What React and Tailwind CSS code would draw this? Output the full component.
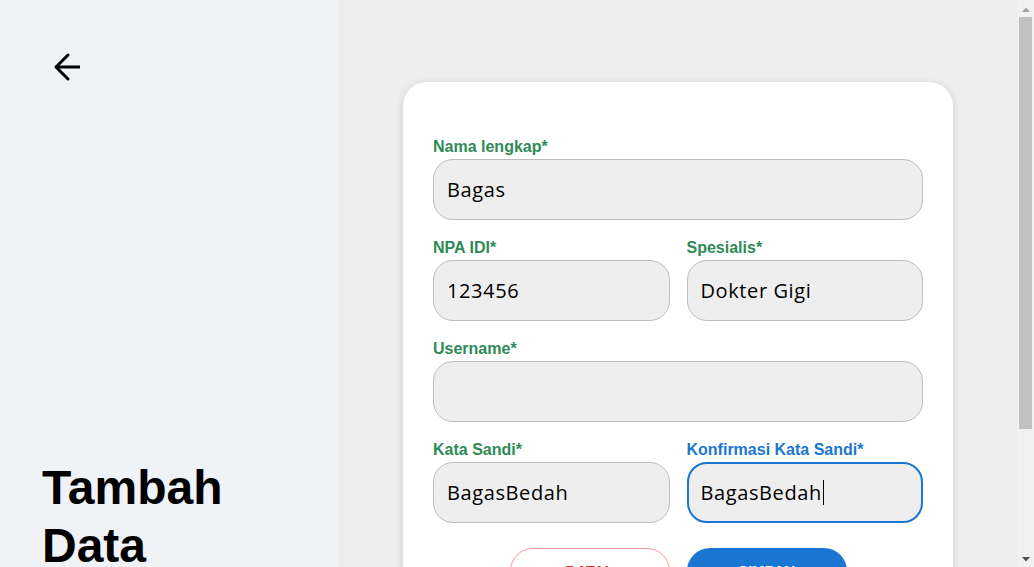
import React from "react";

const font = { fontFamily: '"Liberation Sans", Arial, sans-serif' };
const inFont = { fontFamily: '"Open Sans", "Noto Sans", sans-serif' };

function Field({ label, value, focused }) {
  return (
    <div className="flex-1 min-w-0">
      <label
        className={
          focused
            ? "block h-[19px] leading-[19px] mb-[3px] text-[16px] font-bold text-[#1976d2]"
            : "block h-[19px] leading-[19px] mb-[3px] text-[16px] font-bold text-[#2e8b57]"
        }
        style={font}
      >
        {label}*
      </label>
      <div
        className={
          focused
            ? "w-full h-[61px] rounded-[20px] border-2 border-[#1976d2] bg-[#eeeeee] pl-[12px] text-[20px] tracking-[0.6px] text-black flex items-center"
            : "w-full h-[61px] rounded-[20px] border border-[#bdbdbd] bg-[#eeeeee] pl-[13px] text-[20px] tracking-[0.6px] text-black flex items-center"
        }
        style={inFont}
      >
        <span>{value}</span>
        {focused && <span className="inline-block w-[1px] h-[25px] bg-black ml-[1px]" />}
      </div>
    </div>
  );
}

function Scrollbar() {
  return (
    <div className="w-[17px] shrink-0 h-full bg-[#f1f1f1] flex flex-col items-center">
      <div className="h-[15px] w-full flex items-center justify-center">
        <svg width="8" height="5" viewBox="0 0 8 5" className="mt-[3px]">
          <path d="M0 5L4 0.5L8 5z" fill="#a3a3a3" />
        </svg>
      </div>
      <div className="mt-[2px] h-[412px] w-[13px] bg-[#c1c1c1]" />
      <div className="flex-1" />
      <div className="h-[15px] w-full flex items-center justify-center">
        <svg width="8" height="5" viewBox="0 0 8 5" className="mb-[1px]">
          <path d="M0 0L4 4.5L8 0z" fill="#505050" />
        </svg>
      </div>
    </div>
  );
}

export default function App() {
  return (
    <div className="h-screen w-full flex overflow-hidden" style={font}>
      <div className="flex-1 min-w-0 h-full overflow-hidden">
        <div className="flex h-[740px] w-full">
          <div className="w-[339px] shrink-0 bg-[#eff2f7] flex flex-col">
            <svg
              className="ml-[47px] mt-[47px]"
              width="40"
              height="40"
              viewBox="0 0 40 40"
              fill="none"
              stroke="black"
              strokeWidth="3"
              strokeLinejoin="round"
            >
              <path d="M8.5 20H33" strokeLinecap="butt" />
              <path d="M21 8L9 20l12 12" strokeLinecap="round" />
            </svg>
            <h1 className="ml-[42px] mt-[372px] text-[48px] leading-[58px] font-bold text-black">
              Tambah
              <br />
              Data
            </h1>
          </div>
          <div className="flex-1 bg-[#eeeeee] flex justify-center">
            <div className="mt-[82px] w-[550px] h-[600px] bg-white rounded-[24px] shadow-[0_2px_8px_rgba(0,0,0,0.15)] px-[30px] pt-[55px]">
              <div className="flex flex-col gap-[18px]">
                <Field label="Nama lengkap" value="Bagas" />
                <div className="flex gap-[17px]">
                  <Field label="NPA IDI" value="123456" />
                  <Field label="Spesialis" value="Dokter Gigi" />
                </div>
                <Field label="Username" value="" />
                <div className="flex gap-[17px]">
                  <Field label="Kata Sandi" value="BagasBedah" />
                  <Field label="Konfirmasi Kata Sandi" value="BagasBedah" focused />
                </div>
              </div>
              <div className="mt-[25px] flex justify-center gap-[17px]">
                <button className="w-[160px] h-[46px] rounded-[23px] border border-[#ef9a9a] text-[#d32f2f] font-bold text-[15px] bg-white">
                  BATAL
                </button>
                <button className="w-[160px] h-[46px] rounded-[23px] bg-[#1976d2] text-white font-bold text-[15px]">
                  SIMPAN
                </button>
              </div>
            </div>
          </div>
        </div>
      </div>
      <Scrollbar />
    </div>
  );
}
